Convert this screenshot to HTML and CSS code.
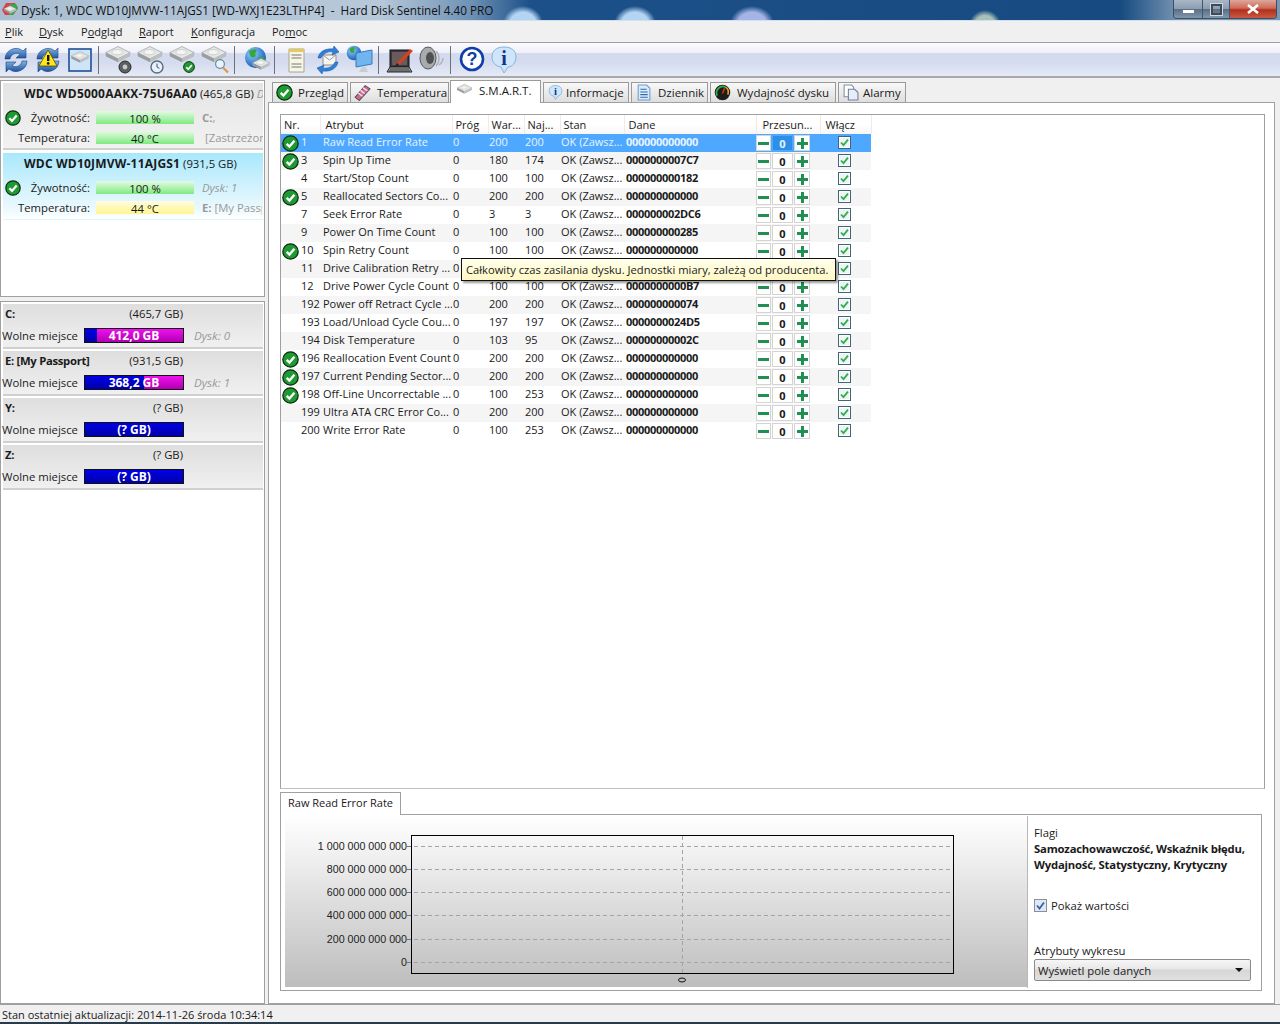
FILE: index.html
```html
<!DOCTYPE html>
<html lang="pl">
<head>
    <meta charset="UTF-8">
    <title>Hard Disk Sentinel 4.40 PRO</title>
    <link rel="stylesheet" href="styles.css">
</head>
<body>
    <svg class="defs" width="0" height="0">
        <defs>
            <linearGradient id="blueArc" x1="0" y1="0" x2="0" y2="1"><stop offset="0" stop-color="#7fb4e6"/><stop offset="1" stop-color="#1c4f9c"/></linearGradient>
            <radialGradient id="globeFill" cx=".35" cy=".3" r=".8"><stop offset="0" stop-color="#8fd0ff"/><stop offset="1" stop-color="#0d4fb0"/></radialGradient>
            <symbol id="ok" viewBox="0 0 16 16">
                <circle cx="8" cy="8" r="7.2" fill="#1f9a32" stroke="#0c2c10" stroke-width="1.2"/>
                <path d="M4.4 8.3l2.6 2.6 4.7-5.4" fill="none" stroke="#fff" stroke-width="2.2"/>
            </symbol>
            <symbol id="tick" viewBox="0 0 13 13">
                <rect x=".5" y=".5" width="12" height="12" fill="#fff" stroke="#3f6678"/>
                <rect x="2" y="2" width="9" height="9" fill="#eef4f4"/>
                <path d="M3 6.5l2.5 2.6 4.5-5.4" fill="none" stroke="#2fae4e" stroke-width="1.8"/>
            </symbol>
            <symbol id="disk" viewBox="0 0 32 32">
                <path d="M2 11L16 4l14 7-14 7z" fill="#e4e6e6" stroke="#8d9090" stroke-width=".7"/>
                <path d="M2 11l14 7v4L2 15z" fill="#9a9d9d"/>
                <path d="M30 11l-14 7v4l14-7z" fill="#bcbfbf"/>
                <ellipse cx="15" cy="10.5" rx="6" ry="3" fill="#f4f5f5" stroke="#b4b6b6" stroke-width=".6"/>
            </symbol>
            <symbol id="refresh" viewBox="0 0 32 32">
                <path d="M5 15a11 11 0 0 1 18-8l3-3v10H16l4-3.6A6.5 6.5 0 0 0 10 15z" fill="url(#blueArc)" stroke="#1a3f7c" stroke-width=".6"/>
                <path d="M27 17a11 11 0 0 1-18 8l-3 3V18h10l-4 3.6A6.5 6.5 0 0 0 22 17z" fill="url(#blueArc)" stroke="#1a3f7c" stroke-width=".6"/>
            </symbol>
            <symbol id="globe" viewBox="0 0 24 24">
                <circle cx="12" cy="12" r="11" fill="url(#globeFill)"/>
                <path d="M5 6c3-3 6-3 8-2 1 2-2 3-1 5s-1 3-3 3-3-3-4-6zM15 12c3-1 6 0 7 2-1 3-3 6-5 6-1-2 0-3-1-5z" fill="#36a83a"/>
            </symbol>
        </defs>
    </svg>

    <div class="window">
        <header class="titlebar">
            <svg class="app-icon" viewBox="0 0 16 16"><path d="M0 8L4 1h9l3 5-5 7H3z" fill="#d8404a"/><path d="M8 2h6l2 4-5 7H7z" fill="#3ea64a"/><use href="#disk" x="1" y="2" width="14" height="14"/></svg>
            <span class="title-text">Dysk: 1, WDC WD10JMVW-11AJGS1 [WD-WXJ1E23LTHP4] &nbsp;-&nbsp; Hard Disk Sentinel 4.40 PRO</span>
            <div class="win-buttons">
                <span class="win-btn win-min"><i></i></span>
                <span class="win-btn win-max"><i></i></span>
                <span class="win-btn win-close">
                    <svg viewBox="0 0 14 10" width="14" height="10"><path d="M2 1l10 8M12 1L2 9" stroke="#fff" stroke-width="2.6"/></svg>
                </span>
            </div>
        </header>

        <nav class="menubar">
            <span class="m-plik"><u>P</u>lik</span>
            <span class="m-dysk"><u>D</u>ysk</span>
            <span class="m-podglad">P<u>o</u>dgląd</span>
            <span class="m-raport"><u>R</u>aport</span>
            <span class="m-konf"><u>K</u>onfiguracja</span>
            <span class="m-pomoc">Po<u>m</u>oc</span>
        </nav>

        <div class="toolbar">
            <svg class="tool" viewBox="0 0 32 32"><use href="#refresh" width="32" height="32"/></svg>
            <svg class="tool" viewBox="0 0 32 32"><use href="#refresh" width="32" height="32"/><path d="M16 6l9 16H7z" fill="#ffe818" stroke="#5a4a00" stroke-width=".8"/><rect x="15" y="11" width="2.4" height="6" fill="#111"/><circle cx="16.2" cy="19.4" r="1.3" fill="#111"/></svg>
            <svg class="tool" viewBox="0 0 32 32"><rect x="5" y="5" width="22" height="22" fill="#cfe4f6" stroke="#1d4f9a" stroke-width="1.6"/><use href="#disk" x="6" y="5" width="20" height="20"/></svg>
            <span class="tool-sep"></span>
            <svg class="tool" viewBox="0 0 32 32"><use href="#disk" y="-1" width="28" height="28"/><circle cx="21" cy="23" r="6" fill="#5c5f60" stroke="#2a2c2d"/><circle cx="21" cy="23" r="2.4" fill="#c8cbcc"/></svg>
            <svg class="tool" viewBox="0 0 32 32"><use href="#disk" y="-1" width="28" height="28"/><circle cx="21" cy="23" r="6" fill="#e8f0f8" stroke="#5a6a80" stroke-width="1.4"/><path d="M21 19.5V23l2.4 1.4" fill="none" stroke="#35507a"/></svg>
            <svg class="tool" viewBox="0 0 32 32"><use href="#disk" y="-1" width="28" height="28"/><use href="#ok" x="15" y="17" width="12" height="12"/></svg>
            <svg class="tool" viewBox="0 0 32 32"><use href="#disk" y="-1" width="28" height="28"/><circle cx="20" cy="20" r="4.4" fill="#e6f4fc" stroke="#6a8aa0" stroke-width="1.2"/><path d="M23 23.5l5 5" stroke="#d99a50" stroke-width="2.2"/></svg>
            <span class="tool-sep"></span>
            <svg class="tool" viewBox="0 0 32 32"><use href="#globe" x="4" y="2" width="23" height="23"/><use href="#disk" x="11" y="12" width="20" height="20"/></svg>
            <span class="tool-sep"></span>
            <svg class="tool" viewBox="0 0 32 32"><path d="M9 5h15v23H9z" fill="#f7f5e8" stroke="#a9a68e"/><path d="M9 5h15v3H9z" fill="#e5c860"/><path d="M11.5 11h10M11.5 14h10M11.5 20h10M11.5 23h10" stroke="#77786e"/></svg>
            <svg class="tool" viewBox="0 0 32 32"><path d="M11 11h13v10H11z" fill="#f6f6ee" stroke="#8f9294"/><path d="M11 11l6.500 5 6.500-5" fill="none" stroke="#9a9d9e"/><path d="M6 14C7 8 13 4 21 5l1-3 5 6-7 3 1-3c-6-1-10 2-12 6zM26 18c-1 6-7 10-15 9l-1 3-5-6 7-3-1 3c6 1 10-2 12-6z" fill="#2f80d8" stroke="#174f96" stroke-width=".5"/></svg>
            <svg class="tool" viewBox="0 0 32 32"><use href="#globe" x="2" y="1" width="16" height="16"/><path d="M12 9l16-3v14l-16 3z" fill="#6fb6f0" stroke="#3a78b8"/><path d="M18 23h4l2 5H15z" fill="#c9ced6"/></svg>
            <span class="tool-sep"></span>
            <svg class="tool" viewBox="0 0 32 32"><rect x="6" y="6" width="19" height="17" fill="#3c3a40" stroke="#111"/><path d="M8 8h15v13H8z" fill="#6b5a5c"/><path d="M3 28l3-5h19l3 5z" fill="#a8aaac" stroke="#222"/><path d="M6 25h19M5 27h21" stroke="#333"/><path d="M13 19L26 5l3 2-14 14z" fill="#d8401e"/><path d="M13 19l2 2-4 2z" fill="#222"/></svg>
            <svg class="tool" viewBox="0 0 32 32"><ellipse cx="12" cy="14" rx="8" ry="11" fill="#a8aaac" stroke="#55585a"/><ellipse cx="14" cy="14" rx="4" ry="6" fill="#4e5052"/><path d="M20 7c4 4 4 11 0 15M23 21c3-2 4-5 4-7" fill="none" stroke="#b0b2b8" stroke-width="1.4"/></svg>
            <span class="tool-sep"></span>
            <svg class="tool" viewBox="0 0 32 32"><circle cx="16" cy="15" r="11" fill="#fff" stroke="#0f3fa8" stroke-width="2.6"/><text x="16" y="21" class="tool-glyph help-glyph">?</text></svg>
            <svg class="tool" viewBox="0 0 32 32"><path d="M16 3c8 0 12 4 12 10s-4 10-8 10l-4 6-3-6c-5-1-9-4-9-10S8 3 16 3z" fill="#cfe6fa" stroke="#82b3de"/><text x="16" y="21" class="tool-glyph info-glyph">i</text></svg>
        </div>

        <div class="main">
            <aside class="sidebar">
                <section class="disk-panel">
                    <div class="disk-card">
                        <div class="disk-name"><b>WDC WD5000AAKX-75U6AA0</b> (465,8 GB) <em>D</em></div>
                        <div class="disk-row">
                            <svg class="disk-ok"><use href="#ok"/></svg>
                            <span class="disk-label">Żywotność:</span>
                            <span class="meter meter-green">100 %</span>
                            <span class="disk-note"><b>C:</b>,</span>
                        </div>
                        <div class="disk-row">
                            <span class="disk-label">Temperatura:</span>
                            <span class="meter meter-green">40 °C</span>
                            <span class="disk-note disk-note-far">[Zastrzeżone]</span>
                        </div>
                    </div>
                    <div class="disk-card disk-card-active">
                        <div class="disk-name"><b>WDC WD10JMVW-11AJGS1</b> (931,5 GB)</div>
                        <div class="disk-row">
                            <svg class="disk-ok"><use href="#ok"/></svg>
                            <span class="disk-label">Żywotność:</span>
                            <span class="meter meter-green">100 %</span>
                            <span class="disk-note"><em>Dysk: 1</em></span>
                        </div>
                        <div class="disk-row">
                            <span class="disk-label">Temperatura:</span>
                            <span class="meter meter-yellow">44 °C</span>
                            <span class="disk-note"><b>E:</b> [My Passport]</span>
                        </div>
                    </div>
                </section>

                <section class="part-panel">
                    <div class="part-card">
                        <div class="part-head"><b>C:</b><span>(465,7 GB)</span></div>
                        <div class="part-row">
                            <span class="part-label">Wolne miejsce</span>
                            <span class="space-bar"><i class="space-used" style="width:12%"></i><span>412,0 GB</span></span>
                            <em>Dysk: 0</em>
                        </div>
                    </div>
                    <div class="part-card">
                        <div class="part-head"><b>E: [My Passport]</b><span>(931,5 GB)</span></div>
                        <div class="part-row">
                            <span class="part-label">Wolne miejsce</span>
                            <span class="space-bar"><i class="space-used" style="width:60%"></i><span>368,2 GB</span></span>
                            <em>Dysk: 1</em>
                        </div>
                    </div>
                    <div class="part-card">
                        <div class="part-head"><b>Y:</b><span>(? GB)</span></div>
                        <div class="part-row">
                            <span class="part-label">Wolne miejsce</span>
                            <span class="space-bar"><i class="space-used" style="width:100%"></i><span>(? GB)</span></span>
                        </div>
                    </div>
                    <div class="part-card">
                        <div class="part-head"><b>Z:</b><span>(? GB)</span></div>
                        <div class="part-row">
                            <span class="part-label">Wolne miejsce</span>
                            <span class="space-bar"><i class="space-used" style="width:100%"></i><span>(? GB)</span></span>
                        </div>
                    </div>
                </section>
            </aside>

            <div class="content">
                <div class="tabs">
                    <span class="tab tab-overview"><svg class="tab-icon"><use href="#ok"/></svg>Przegląd</span>
                    <span class="tab tab-temp"><svg class="tab-icon" viewBox="0 0 16 16"><path d="M1 12.500L10.500 1.500l4.500 3-10 11z" fill="#d9669a" stroke="#555"/><path d="M4 8.500l4 3M6 6l4 3M8.500 3.500l4 3" stroke="#eee" stroke-width="1.300"/></svg>Temperatura</span>
                    <span class="tab tab-smart tab-active"><svg class="tab-icon" viewBox="0 0 32 32"><use href="#disk" width="32" height="32"/></svg>S.M.A.R.T.</span>
                    <span class="tab tab-info"><svg class="tab-icon" viewBox="0 0 32 32"><path d="M16 3c8 0 12 4 12 10s-4 10-8 10l-4 6-3-6c-5-1-9-4-9-10S8 3 16 3z" fill="#cfe6fa" stroke="#82b3de" stroke-width="1.6"/><text x="16" y="21" class="tool-glyph info-glyph">i</text></svg>Informacje</span>
                    <span class="tab tab-log"><svg class="tab-icon" viewBox="0 0 16 16"><path d="M3 1h8l3 3v11H3z" fill="#dcebfa" stroke="#6f9ccc"/><path d="M5 5h6M5 7.500h7M5 10h7M5 12.500h7" stroke="#2f68b0"/></svg>Dziennik</span>
                    <span class="tab tab-perf"><svg class="tab-icon" viewBox="0 0 16 16"><circle cx="8" cy="8" r="7.300" fill="#1c1c18"/><path d="M3 11a6 6 0 0 1 8-8" fill="none" stroke="#2fb04a" stroke-width="1.600"/><path d="M11 3a6 6 0 0 1 2 7" fill="none" stroke="#e0a020" stroke-width="1.600"/><path d="M8 9l2-5" stroke="#e03020" stroke-width="1.400"/></svg>Wydajność dysku</span>
                    <span class="tab tab-alarm"><svg class="tab-icon" viewBox="0 0 16 16"><path d="M2 1h7l2 2v9H2z" fill="#fff" stroke="#7e8fa8"/><path d="M6 5h6l3 3v7H6z" fill="#e8eef8" stroke="#6f80a0"/></svg>Alarmy</span>
                </div>

                <div class="tab-body">
                    <div class="smart-box">
                        <table class="smart">
                            <colgroup>
                                <col class="c-nr"><col class="c-name"><col class="c-num"><col class="c-num"><col class="c-num"><col class="c-state"><col class="c-data"><col class="c-shift"><col class="c-on">
                            </colgroup>
                            <thead>
                                <tr><th>Nr.</th><th class="th-wide">Atrybut</th><th>Próg</th><th>War...</th><th>Naj...</th><th>Stan</th><th class="th-data">Dane</th><th class="th-shift">Przesun...</th><th class="th-wide">Włącz</th></tr>
                            </thead>
                            <tbody id="smartRows"></tbody>
                        </table>
                    </div>

                    <div class="detail-tab">Raw Read Error Rate</div>
                    <div class="detail">
                        <div class="chart">
                            <svg width="742" height="171" viewBox="0 0 742 171">
                                <g class="grid">
                                    <path d="M122 30.500H668M122 53.500H668M122 76.500H668M122 99.500H668M122 123.500H668M122 146.500H668M397.500 20V157"/>
                                </g>
                                <path d="M122 30.500h5M122 53.500h5M122 76.500h5M122 99.500h5M122 123.500h5M122 146.500h5" stroke="#777"/>
                                <rect x="126.500" y="19.500" width="542" height="138" fill="none" stroke="#000"/>
                                <g class="axis">
                                    <text x="122" y="34">1 000 000 000 000</text>
                                    <text x="122" y="57">800 000 000 000</text>
                                    <text x="122" y="80">600 000 000 000</text>
                                    <text x="122" y="103">400 000 000 000</text>
                                    <text x="122" y="127">200 000 000 000</text>
                                    <text x="122" y="150">0</text>
                                </g>
                                <ellipse cx="397" cy="164" rx="3.500" ry="2" fill="none" stroke="#111"/>
                            </svg>
                        </div>
                        <div class="detail-side">
                            <div class="flags-label">Flagi</div>
                            <div class="flags-value">Samozachowawczość, Wskaźnik błędu, Wydajność, Statystyczny, Krytyczny</div>
                            <label class="show-values">
                                <svg viewBox="0 0 13 13"><rect x=".5" y=".5" width="12" height="12" fill="#dfe8f6" stroke="#8a8f98"/><path d="M3 6.500l2.500 3L10 3.500" fill="none" stroke="#3a5fb0" stroke-width="1.800"/></svg>
                                Pokaż wartości
                            </label>
                            <div class="chart-attr">Atrybuty wykresu</div>
                            <div class="combo"><span>Wyświetl pole danych</span><i></i></div>
                        </div>
                    </div>
                </div>
            </div>
        </div>

        <footer class="statusbar">Stan ostatniej aktualizacji: 2014-11-26 środa 10:34:14</footer>
    </div>

    <div class="tooltip">Całkowity czas zasilania dysku. Jednostki miary, zależą od producenta.</div>

    <script src="rows.js"></script>
</body>
</html>
```

FILE: styles.css
```css
html, body {
    margin: 0;
    height: 100%;
    overflow: hidden;
}
body {
    position: relative;
    background: #2a3a4a;
    color: #1a1a1a;
    font-family: "Open Sans", "Noto Sans", Arial, sans-serif;
    font-size: 11.3px;
}
.defs {
    position: absolute;
}
.window {
    display: flex;
    flex-direction: column;
    height: 1022px;
    background: #f0f0f0;
}

/* title bar */
.titlebar {
    display: flex;
    align-items: flex-start;
    flex: none;
    height: 20px;
    border-bottom: 1px solid #cfe0ee;
    color: #111;
    font-size: 11.7px;
    background:
        radial-gradient(ellipse 20px 18px at 523px 24px, #b4d4f4 65%, transparent),
        radial-gradient(ellipse 21px 18px at 635px 24px, #b4d4f4 65%, transparent),
        radial-gradient(ellipse 22px 18px at 752px 24px, #a4b4e4 65%, transparent),
        radial-gradient(ellipse 16px 16px at 985px 26px, #a8c0b8 65%, transparent),
        linear-gradient(90deg, #a9bed2 0, #b7c8da 380px, #6f93b6 470px, #1c5088 530px, #164a80 1120px, #7a97b4 1180px);
}
.app-icon {
    flex: none;
    width: 16px;
    height: 16px;
    margin: 2px 3px 0 2px;
}
.title-text {
    flex: none;
    line-height: 21px;
    white-space: pre;
}
.win-buttons {
    display: flex;
    margin-left: auto;
    margin-right: 3px;
    height: 18px;
    border: 1px solid #3b4f63;
    border-top: 0;
    border-radius: 0 0 4px 4px;
    overflow: hidden;
}
.win-btn {
    display: flex;
    align-items: center;
    justify-content: center;
    box-sizing: border-box;
    height: 18px;
    border-left: 1px solid #44586c;
    background: linear-gradient(#a9b7c6 0, #8c9db0 50%, #5a6f86 52%, #8297ac 100%);
}
.win-min {
    width: 28px;
    border-left: 0;
}
.win-min i {
    display: block;
    width: 11px;
    height: 3px;
    margin-top: 4px;
    background: #fff;
}
.win-max {
    width: 27px;
}
.win-max i {
    display: block;
    width: 7px;
    height: 7px;
    border: 2px solid #404a58;
    outline: 1px solid #cfd6de;
}
.win-close {
    width: 47px;
    background: linear-gradient(#dca79c 0, #cf6a58 45%, #b2301c 55%, #c85a44 100%);
}

/* menu */
.menubar {
    display: flex;
    flex: none;
    box-sizing: border-box;
    height: 22px;
    border-bottom: 1px solid #a0a0a0;
    line-height: 21px;
    font-size: 11px;
}
.menubar span {
    flex: none;
}
.m-plik { margin-left: 5px; width: 34px; }
.m-dysk { width: 42px; }
.m-podglad { width: 58px; }
.m-raport { width: 52px; }
.m-konf { width: 81px; }

/* toolbar */
.toolbar {
    display: flex;
    align-items: center;
    flex: none;
    box-sizing: border-box;
    height: 35px;
    border-bottom: 2px solid #a6a8ac;
    background: linear-gradient(#fbfbfe 0, #eef0f9 30%, #d3daee 32%, #d5dcef 60%, #e6eaf6 100%);
}
.tool {
    flex: none;
    width: 32px;
    height: 32px;
}
.tool-glyph {
    text-anchor: middle;
    font-family: "Liberation Serif", serif;
    font-weight: bold;
}
.help-glyph {
    font-family: "Liberation Sans", sans-serif;
    font-size: 18px;
    fill: #0f3fa8;
}
.info-glyph {
    font-size: 20px;
    fill: #12347e;
}
.tool-sep {
    flex: none;
    width: 1px;
    height: 28px;
    margin: 0 5px 0 2px;
    background: #6c7078;
}

/* layout */
.main {
    display: flex;
    flex: 1;
    min-height: 0;
}
.sidebar {
    display: flex;
    flex-direction: column;
    flex: none;
    box-sizing: border-box;
    width: 265px;
    padding-top: 2px;
}
.content {
    display: flex;
    flex-direction: column;
    flex: none;
    box-sizing: border-box;
    width: 1007px;
    margin-left: 3px;
}

/* disks */
.disk-panel {
    flex: none;
    box-sizing: border-box;
    height: 217px;
    padding: 2px 1px 0 2px;
    border: 1px solid #a0a0a0;
    background: #fff;
}
.disk-card {
    box-sizing: border-box;
    height: 67px;
    margin-bottom: 3px;
    padding-top: 2px;
    overflow: hidden;
    border-bottom: 2px solid #d0d0d0;
    background: linear-gradient(#e4e4e4, #f2f2f2);
}
.disk-card-active {
    border-bottom: 1px solid #e0f4fc;
    background: linear-gradient(#a8e8fc, #ecf9fe 85%, #fff);
}
.disk-name {
    height: 22px;
    padding-left: 21px;
    line-height: 18px;
    white-space: nowrap;
    overflow: hidden;
}
.disk-name b {
    font-size: 12px;
    letter-spacing: .2px;
}
.disk-name em {
    color: #999;
}
.disk-row {
    position: relative;
    display: flex;
    align-items: center;
    height: 20px;
}
.disk-ok {
    position: absolute;
    left: 2px;
    top: 3px;
    width: 16px;
    height: 16px;
}
.disk-label {
    flex: none;
    width: 87px;
    text-align: right;
}
.meter {
    flex: none;
    width: 98px;
    height: 13px;
    margin-left: 6px;
    text-align: center;
    line-height: 15px;
}
.meter-green {
    background: linear-gradient(#e4fbe4, #80ea80);
}
.meter-yellow {
    background: linear-gradient(#fffde0, #fff590);
}
.disk-note {
    flex: none;
    width: 60px;
    margin-left: 8px;
    color: #999;
    white-space: nowrap;
    overflow: hidden;
}
.disk-note-far {
    margin-left: 11px;
}

/* partitions */
.part-panel {
    flex: 1;
    margin-top: 4px;
    padding: 2px 1px 0 2px;
    border: 1px solid #a0a0a0;
    background: #fff;
}
.part-card {
    box-sizing: border-box;
    height: 45px;
    margin-bottom: 2px;
    border-bottom: 2px solid #d0d0d0;
    background: linear-gradient(#dedede, #f0f0f0);
}
.part-head {
    display: flex;
    justify-content: space-between;
    width: 178px;
    padding: 1px 0 0 2px;
    height: 21px;
    line-height: 18px;
}
.part-head b {
    letter-spacing: -.3px;
}
.part-row {
    display: flex;
    align-items: center;
    margin-left: -1px;
    height: 19px;
}
.part-label {
    flex: none;
    width: 82px;
}
.part-row em {
    margin-left: 10px;
    color: #999;
    font-size: 11.6px;
}
.space-bar {
    position: relative;
    flex: none;
    box-sizing: border-box;
    width: 100px;
    height: 15px;
    border: 1px solid #111;
    color: #fff;
    font-size: 12px;
    font-weight: bold;
    text-align: center;
    line-height: 14px;
    background: linear-gradient(#f010f0, #b000b0);
}
.space-bar span {
    position: relative;
}
.space-used {
    position: absolute;
    left: 0;
    top: 0;
    bottom: 0;
    background: linear-gradient(#0000e8, #0000a8);
}

/* tabs */
.tabs {
    display: flex;
    align-items: flex-end;
    flex: none;
    box-sizing: border-box;
    height: 24px;
    padding-left: 4px;
    gap: 2px;
    font-size: 11.5px;
}
.tab {
    display: flex;
    align-items: center;
    flex: none;
    box-sizing: border-box;
    height: 20px;
    padding-left: 3px;
    border: 1px solid #9a9a9a;
    border-bottom: 0;
    background: linear-gradient(#f8f8f8, #dedede);
    white-space: nowrap;
    overflow: hidden;
}
.tab-icon {
    flex: none;
    width: 17px;
    height: 17px;
    margin-right: 5px;
}
.tab-overview { width: 76px; }
.tab-temp { width: 99px; }
.tab-temp .tab-icon { margin-right: 6px; }
.tab-info { width: 86px; }
.tab-info .tab-icon { margin-right: 2px; }
.tab-log { width: 77px; }
.tab-log .tab-icon { margin-right: 6px; }
.tab-perf { width: 126px; }
.tab-perf .tab-icon { margin-right: 6px; }
.tab-alarm { width: 68px; }
.tab-alarm .tab-icon { margin-right: 4px; }
.tab-smart {
    position: relative;
    width: 91px;
    height: 23px;
    margin: 0 0 -1px -1px;
    padding: 0 0 4px 4px;
    background: #fff;
}
.tab-smart .tab-icon {
    width: 19px;
    margin-right: 5px;
}
.tab-body {
    flex: 1;
    box-sizing: border-box;
    padding: 11px 0 0 11px;
    border: 1px solid #a0a0a0;
    background: #fff;
}

/* smart table */
.smart-box {
    box-sizing: border-box;
    width: 985px;
    height: 675px;
    border: 1px solid #a0a0a0;
    border-bottom-color: #c0c0c0;
    overflow: hidden;
    font-size: 11px;
}
.smart {
    table-layout: fixed;
    width: 590px;
    border-collapse: collapse;
}
.c-nr { width: 39px; }
.c-name { width: 132px; }
.c-num { width: 36px; }
.c-state { width: 64px; }
.c-data { width: 132px; }
.c-shift { width: 64px; }
.c-on { width: 51px; }
.smart th {
    height: 19px;
    padding: 0 0 0 3px;
    border-right: 1px solid #ececec;
    font-weight: normal;
    text-align: left;
    background: linear-gradient(#fff 50%, #f6f6f6);
    white-space: nowrap;
    overflow: hidden;
}
.smart th.th-wide {
    padding-left: 5px;
}
.smart th.th-data {
    padding-left: 4px;
}
.smart th.th-shift {
    padding-left: 6px;
}
.smart td {
    height: 18px;
    padding: 0 0 0 1px;
    vertical-align: top;
    line-height: 15px;
    white-space: nowrap;
    overflow: hidden;
}
.smart td.name-cell {
    padding-left: 3px;
}
.smart td.data-cell {
    padding-left: 2px;
    font-weight: bold;
    letter-spacing: -.3px;
}
.smart td.shift-cell {
    padding-left: 0;
}
.smart tbody tr:nth-child(even) {
    background: #f5f5f5;
}
.smart tr.selected {
    background: #4ea8ff;
    color: #e6f3ff;
}
.nr-cell {
    display: flex;
    align-items: flex-start;
    height: 18px;
    margin-left: -1px;
}
.nr-slot {
    flex: none;
    display: flex;
    width: 20px;
    height: 18px;
    padding: 1px 0 0 1px;
    box-sizing: border-box;
}
.nr-slot svg {
    width: 17px;
    height: 17px;
}
.stepper {
    display: flex;
    height: 16px;
    margin-top: 1px;
}
.stepper i, .stepper b {
    flex: none;
    box-sizing: border-box;
    height: 16px;
    border: 1px solid #d4d4d4;
    background-color: #fff;
}
.step-minus {
    width: 15px;
    background: linear-gradient(#1f8f52, #1f8f52) center / 11px 3px no-repeat;
}
.step-plus {
    width: 16px;
    margin-left: 1px;
    background:
        linear-gradient(#1f8f52, #1f8f52) center / 11px 3px no-repeat,
        linear-gradient(#1f8f52, #1f8f52) center / 3px 11px no-repeat;
}
.stepper b {
    width: 21px;
    margin-left: 1px;
    text-align: center;
    line-height: 15px;
}
tr.selected .stepper b {
    border-color: #4ea8ff;
    background: #2e8fe8;
}
.on-cell svg {
    display: block;
    width: 13px;
    height: 13px;
    margin: 2px 0 0 17px;
}

/* detail */
.detail-tab {
    position: relative;
    box-sizing: border-box;
    width: 121px;
    height: 23px;
    margin-top: 3px;
    margin-bottom: -1px;
    padding-left: 7px;
    border: 1px solid #a0a0a0;
    border-bottom: 0;
    background: #fff;
    font-size: 11px;
    line-height: 20px;
}
.detail {
    display: flex;
    box-sizing: border-box;
    width: 982px;
    height: 177px;
    padding: 1px 0 0 4px;
    border: 1px solid #a0a0a0;
}
.chart {
    flex: none;
    width: 742px;
    height: 171px;
    background: linear-gradient(#fff, #bdbdbd);
}
.chart svg {
    display: block;
}
.grid path {
    fill: none;
    stroke: #a4a4a4;
    stroke-dasharray: 4 3;
}
.axis text {
    text-anchor: end;
    font-family: "Liberation Sans", Arial, sans-serif;
    font-size: 10.7px;
    fill: #222;
}
.detail-side {
    flex: none;
    width: 232px;
    height: 172px;
    padding-left: 6px;
    box-sizing: border-box;
    border-left: 1px solid #b8b8b8;
}
.flags-label {
    margin-top: 9px;
    line-height: 16px;
}
.flags-value {
    width: 222px;
    font-weight: bold;
    line-height: 16px;
    letter-spacing: -.2px;
}
.show-values {
    display: flex;
    align-items: center;
    gap: 4px;
    height: 16px;
    margin-top: 24px;
}
.show-values svg {
    flex: none;
    width: 13px;
    height: 13px;
}
.chart-attr {
    margin-top: 30px;
    line-height: 16px;
}
.combo {
    display: flex;
    align-items: center;
    justify-content: space-between;
    box-sizing: border-box;
    width: 217px;
    height: 22px;
    padding: 0 7px 0 3px;
    border: 1px solid #8a8a8a;
    border-radius: 2px;
    background: linear-gradient(#f6f6f6, #e8e8e8 45%, #d6d6d6 50%, #e0e0e0);
}
.combo i {
    width: 0;
    height: 0;
    border: 4px solid transparent;
    border-top: 4px solid #111;
    border-bottom: 0;
}

/* status */
.statusbar {
    flex: none;
    box-sizing: border-box;
    height: 18px;
    padding-left: 2px;
    border-top: 1px solid #a0a0a0;
    font-size: 11px;
    line-height: 20px;
}
.tooltip {
    position: absolute;
    left: 461px;
    top: 258px;
    box-sizing: border-box;
    width: 375px;
    height: 23px;
    padding-left: 4px;
    border: 1px solid #111;
    background: linear-gradient(#ffffec, #fff8c4);
    box-shadow: 2px 2px 2px rgba(0, 0, 0, 0.4);
    font-size: 11.2px;
    line-height: 21px;
    white-space: nowrap;
}
```

FILE: rows.js
```js
// the cells of row 11 are left out where the tooltip covers them
const rows = [
    [1, 'Raw Read Error Rate', 200, 200, '000000000000', true],
    [3, 'Spin Up Time', 180, 174, '0000000007C7', true],
    [4, 'Start/Stop Count', 100, 100, '000000000182'],
    [5, 'Reallocated Sectors Co...', 200, 200, '000000000000', true],
    [7, 'Seek Error Rate', 3, 3, '000000002DC6'],
    [9, 'Power On Time Count', 100, 100, '000000000285'],
    [10, 'Spin Retry Count', 100, 100, '000000000000', true],
    [11, 'Drive Calibration Retry ...'],
    [12, 'Drive Power Cycle Count', 100, 100, '0000000000B7'],
    [192, 'Power off Retract Cycle ...', 200, 200, '000000000074'],
    [193, 'Load/Unload Cycle Cou...', 197, 197, '0000000024D5'],
    [194, 'Disk Temperature', 103, 95, '00000000002C'],
    [196, 'Reallocation Event Count', 200, 200, '000000000000', true],
    [197, 'Current Pending Sector...', 200, 200, '000000000000', true],
    [198, 'Off-Line Uncorrectable ...', 100, 253, '000000000000', true],
    [199, 'Ultra ATA CRC Error Co...', 200, 200, '000000000000'],
    [200, 'Write Error Rate', 100, 253, '000000000000']
];

const stepper = '<div class="stepper"><i class="step-minus"></i><b>0</b><i class="step-plus"></i></div>';

document.getElementById('smartRows').innerHTML = rows.map((r, i) => `
    <tr${i === 0 ? ' class="selected"' : ''}>
        <td><div class="nr-cell"><span class="nr-slot">${r[5] ? '<svg><use href="#ok"/></svg>' : ''}</span>${r[0]}</div></td>
        <td class="name-cell">${r[1]}</td>
        <td>0</td>
        <td>${r[2] || ''}</td>
        <td>${r[3] || ''}</td>
        <td>${r[4] ? 'OK (Zawsz...' : ''}</td>
        <td class="data-cell">${r[4] || ''}</td>
        <td class="shift-cell">${r[4] ? stepper : ''}</td>
        <td class="on-cell"><svg><use href="#tick"/></svg></td>
    </tr>`).join('');
```
